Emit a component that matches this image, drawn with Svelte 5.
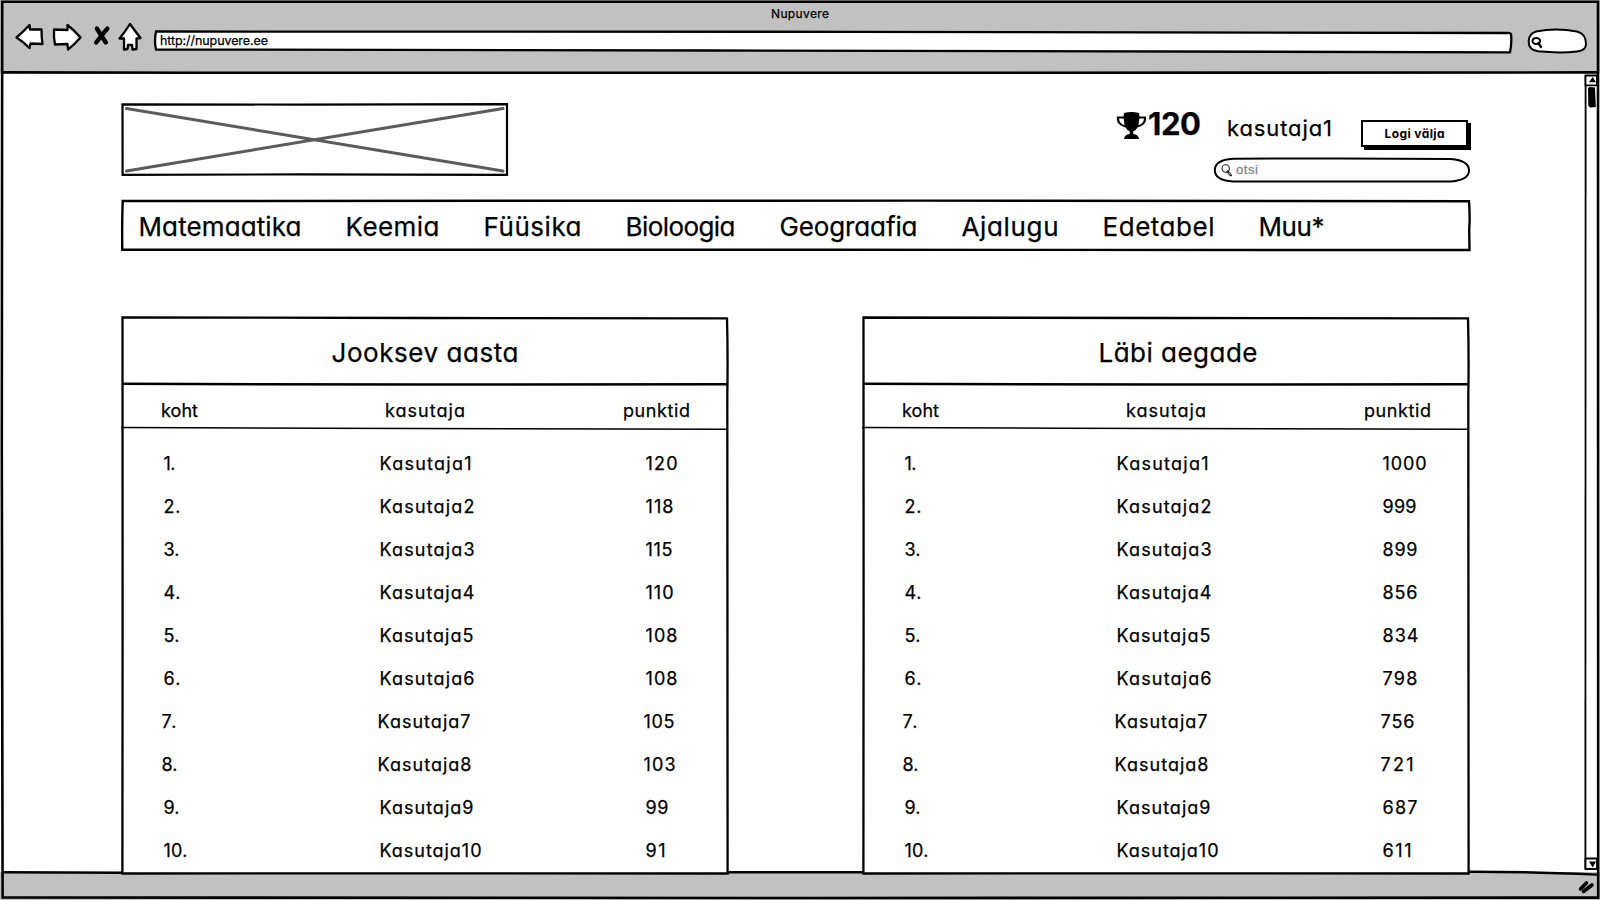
<script>
  const menu = [
    ['Matemaatika', 163], ['Keemia', 94], ['Füüsika', 98], ['Bioloogia', 110],
    ['Geograafia', 138], ['Ajalugu', 97], ['Edetabel', 112], ['Muu*', 66],
  ];

  const nameWidths = [92, 95, 95, 95, 94, 95, 93, 94, 94, 102];
  const placeWidths = [12, 17, 16, 17, 16, 17, 15, 16, 16, 24];

  const boards = [
    {
      title: 'Jooksev aasta', titleWidth: 187, side: 'left',
      points: [['120', 32], ['118', 28], ['115', 27], ['110', 28], ['108', 32], ['108', 32], ['105', 31], ['103', 32], ['99', 23], ['91', 20]],
    },
    {
      title: 'Läbi aegade', titleWidth: 159, side: 'right',
      points: [['1000', 44], ['999', 34], ['899', 35], ['856', 35], ['834', 36], ['798', 35], ['756', 34], ['721', 33], ['687', 35], ['611', 29]],
    },
  ];

  // Spreads the letters of a label so that it fills the given width.
  function fit(node, width) {
    const apply = (w) => {
      node.style.letterSpacing = '0px';
      node.style.marginRight = '0px';
      const natural = node.getBoundingClientRect().width;
      const gap = (w - natural) / Math.max(1, node.textContent.length - 1);
      node.style.letterSpacing = `${gap}px`;
      node.style.marginRight = `${-gap}px`;
    };
    apply(width);
    return { update: apply };
  }
</script>

<div class="browser">
  <header class="toolbar">
    <div class="window-title"><span use:fit={58}>Nupuvere</span></div>
    <div class="controls">
      <svg class="buttons" width="130" height="34" viewBox="14 20 130 34">
        <g fill="#fff" stroke="#000" stroke-width="2.3" stroke-linejoin="round">
          <path d="M16.5 37.5 Q23 32 29.5 25 L30 29.5 L41.5 29.5 Q41.5 37 42.5 44 L30.5 43.5 L29.5 48 Q23 41.5 16.5 37.5Z" />
          <path d="M80.5 37.5 Q75 31 67.5 25 L67.5 30 L54 29.5 Q53.5 37 55 44.5 L67.5 44 L68 49.5 Q75 44 80.5 37.5Z" />
          <path d="M130 24 Q135 31 140.5 38 L136.5 38.5 L136.5 49 L132.5 49.5 L132 45 L128 45 L127.5 49 L124 49.5 L124 38.5 L119.5 38.5 Q125 32 130 24Z" />
        </g>
        <path d="M96.8 28.5 L105.8 42.5 M107.3 28.7 Q102 35 96.2 42.5" stroke="#000" stroke-width="4.4" stroke-linecap="round" fill="none" />
      </svg>
      <div class="address">
        <svg class="sketch" viewBox="0 0 1360 24" preserveAspectRatio="none">
          <path d="M3 1.5 Q1 11 3 19.5 L560 20.5 L1357 22.3 Q1359 13 1358 4 Q1357 2.5 1354 3 L700 1.8Z" fill="#fff" stroke="#000" stroke-width="2.3" />
        </svg>
        <span use:fit={108}>http://nupuvere.ee</span>
      </div>
      <svg class="find" width="62" height="28" viewBox="1526 28 62 28">
        <path d="M1536 31.5 Q1556 27.5 1577 31.5 Q1586 34 1586 44 Q1586 50.5 1577 51.5 Q1560 53.5 1538 51.3 Q1528.5 50 1528.7 41.5 Q1528.5 34 1536 31.5Z" fill="#fff" stroke="#000" stroke-width="2" />
        <ellipse cx="1536.3" cy="41" rx="3.8" ry="3.1" fill="none" stroke="#000" stroke-width="2" />
        <path d="M1538.3 43 L1541 47" stroke="#000" stroke-width="2.3" stroke-linecap="round" />
      </svg>
    </div>
  </header>

  <main>
    <section class="top">
      <svg class="logo" width="388" height="74" viewBox="121 103 388 74">
        <path d="M122.5 104.3 L300 104.6 L507 104.2 L507 174.8 L300 174.4 L122.6 174.8Z" fill="#fff" stroke="#000" stroke-width="2.2" />
        <path d="M126.5 108.5 L503 171 M126.5 171 L503 108.5" stroke="#5b5b5b" stroke-width="3" stroke-linecap="round" />
      </svg>
      <div class="account">
        <div class="user">
          <svg width="31" height="28" viewBox="0 0 31 28">
            <path d="M8 1 Q15.5 -1 23 1 L23.5 4.5 L30 4.5 Q31.5 13 21.5 15.5 Q20 18.5 17.3 19.3 L17.3 22 Q22.5 22.5 23 27 L8 27 Q8.5 22.5 13.7 22 L13.7 19.3 Q11 18.5 9.5 15.5 Q-0.5 13 1 4.5 L7.5 4.5Z M7.6 6.5 L3 6.5 Q3.2 11.5 8.6 13.2 Z M23.4 6.5 L22.4 13.2 Q27.8 11.5 28 6.5Z" fill-rule="evenodd" />
          </svg>
          <b class="score"><span use:fit={53}>120</span></b>
          <span class="name"><span use:fit={105}>kasutaja1</span></span>
          <button><span use:fit={60}>Logi välja</span></button>
        </div>
        <div class="search">
          <svg class="sketch" viewBox="0 0 258 26" preserveAspectRatio="none">
            <path d="M20 1.7 L130 1.4 L238 2 Q256 3.5 256 13.5 Q256 23 238 24.4 L20 24.4 Q1.8 23.5 1.8 13 Q1.8 3 20 1.7Z" fill="#fdfdfd" stroke="#000" stroke-width="2" />
          </svg>
          <svg class="lens" width="12" height="13" viewBox="0 0 12 13">
            <circle cx="4.7" cy="4.5" r="3.7" fill="none" stroke="#222" stroke-width="1.1" />
            <path d="M6.6 7.6 L9.8 11.2" stroke="#222" stroke-width="2.4" stroke-linecap="round" />
            <path d="M7.5 8.6 L9.5 10.8" stroke="#fff" stroke-width=".7" />
          </svg>
          <span use:fit={22}>otsi</span>
        </div>
      </div>
    </section>

    <nav>
      <svg class="sketch" viewBox="0 0 1350 53" preserveAspectRatio="none">
        <path d="M1.7 2 L400 1.8 L800 1.6 L1348 2.2 Q1349.2 20 1348.2 30 L1348.5 51 L700 50.8 L1.3 50.8 Q.8 30 1.7 2Z" fill="#fff" stroke="#000" stroke-width="2.4" />
      </svg>
      {#each menu as [label, width]}
        <span use:fit={width}>{label}</span>
      {/each}
    </nav>

    <section class="boards">
      {#each boards as board}
        <article class={board.side}>
          <svg class="sketch" viewBox="0 0 608 559" preserveAspectRatio="none">
            <path d="M1.5 1.5 L300 2 L606 2.3 Q607 40 606.3 80 L606.6 557.5 L300 557.3 L1.4 557.5 L1.6 300Z" fill="#fff" stroke="#000" stroke-width="2.3" />
            <path d="M1 67.8 L300 68.6 L607 68.2" fill="none" stroke="#000" stroke-width="2.5" />
            <path d="M0 111.6 L200 112.2 L607 113.2" fill="none" stroke="#000" stroke-width="1.5" />
          </svg>
          <h2><span use:fit={board.titleWidth}>{board.title}</span></h2>
          <div class="row head">
            <div><span use:fit={37}>koht</span></div>
            <div><span use:fit={80}>kasutaja</span></div>
            <div><span use:fit={67}>punktid</span></div>
          </div>
          <div class="rows">
            {#each board.points as [score, width], i}
              <div class="row" class:nudged={i === 6 || i === 7}>
                <div><span use:fit={placeWidths[i]}>{i + 1}.</span></div>
                <div><span use:fit={nameWidths[i]}>Kasutaja{i + 1}</span></div>
                <div><span use:fit={width}>{score}</span></div>
              </div>
            {/each}
          </div>
        </article>
      {/each}
    </section>
  </main>

  <svg class="frame" width="1600" height="900" viewBox="0 0 1600 900">
    <path d="M2.5 872.3 L122 872.8 M728 872.3 L863 872.3 M1468 871.7 Q1520 871.5 1597 874.6" fill="none" stroke="#000" stroke-width="2.4" />
    <path d="M3 72.4 L200 72.8 L1000 72.8 L1597 72.4" fill="none" stroke="#000" stroke-width="2.6" />
    <path d="M2.2 1.8 L1598 1.8 L1598.2 897.6 L800 898 L2.6 897.5 L1.8 450Z" fill="none" stroke="#000" stroke-width="2.6" />
    <g fill="#fff" stroke="#000" stroke-width="1.8">
      <path d="M1585.6 75.5 L1585.4 869" />
      <path d="M1585.5 75.5 L1597 75.5 L1597 85.3 L1585.5 85.3Z" />
      <path d="M1585.5 858.5 L1597 858.5 L1597 869 L1585.5 869Z" />
    </g>
    <path d="M1592.7 77 L1596 82.3 L1589 82.3Z M1589 861.5 L1596 861.5 L1592.7 867.5Z" />
    <path d="M1589.5 87 L1595 87.5 L1595.8 107 L1590 107.5 L1588.3 105.5 L1588 88Z" />
    <path d="M1580.5 889 L1586.5 883 M1583.5 891.5 L1592 885" stroke="#000" stroke-width="3.6" stroke-linecap="round" />
  </svg>
</div>

<style>
  :global(body) { margin: 0; overflow: hidden; background: #fff; }
  .browser {
    position: relative;
    display: flex;
    flex-direction: column;
    width: 1600px;
    height: 900px;
    overflow: hidden;
    background: linear-gradient(#fff 872px, #c1c1c1 872px);
    color: #000;
    font-family: Inter, 'Liberation Sans', sans-serif;
    font-feature-settings: 'cv11' 1, 'calt' 0;
    -webkit-text-stroke: 0.25px currentColor;
  }
  span { display: inline-block; white-space: nowrap; }
  .sketch { position: absolute; inset: 0; width: 100%; height: 100%; }
  .sketch ~ * { position: relative; }
  .frame { position: absolute; inset: 0; pointer-events: none; }

  .toolbar { height: 73px; background: #c1c1c1; box-sizing: border-box; }
  .window-title { display: flex; justify-content: center; height: 28px; line-height: 28px; font-size: 12px; }
  .controls { display: flex; padding-left: 14px; }
  .buttons { flex: none; margin-top: -8px; }
  .address {
    position: relative;
    width: 1360px;
    height: 24px;
    margin: 2px 14px 0 9px;
    padding-left: 7px;
    box-sizing: border-box;
    line-height: 21px;
    font-size: 12.5px;
  }
  .find { flex: none; margin-left: -1px; }

  main { flex: 1; padding: 30px 0 0 121px; }
  .top { display: flex; justify-content: space-between; width: 1350px; height: 96px; }
  .account { display: flex; flex-direction: column; align-items: flex-end; }
  .user { display: flex; height: 54px; }
  .user svg { margin: 9px 1px 0 0; }
  .score { width: 79px; font-size: 31px; line-height: 41px; }
  .name { width: 134px; font-size: 22px; line-height: 50px; }
  button {
    width: 107px;
    height: 27px;
    margin: 17px 3px 0 0;
    padding: 0;
    border: 2px solid #000;
    background: #fff;
    box-shadow: 3px 3px 0 #000;
    color: #000;
    font: 700 12px Inter, 'Liberation Sans', sans-serif;
    font-feature-settings: inherit;
    -webkit-text-stroke: 0;
  }
  .search {
    position: relative;
    display: flex;
    width: 258px;
    height: 26px;
    padding-left: 8px;
    box-sizing: border-box;
    gap: 1px;
    color: #808086;
    font: 13px/26px 'Liberation Sans', sans-serif;
  }
  .search .lens { margin: 7px 2px 0 0; }

  nav {
    position: relative;
    display: flex;
    gap: 44px;
    width: 1350px;
    height: 53px;
    padding-left: 17.5px;
    box-sizing: border-box;
    font-size: 26px;
    line-height: 55px;
  }

  .boards { display: flex; gap: 133px; margin-top: 64px; }
  article { position: relative; width: 608px; height: 559px; }
  h2 { margin: 0; height: 68px; font-size: 26px; font-weight: 400; line-height: 74px; text-align: center; }
  .right h2 { padding-left: 24px; }
  .row { display: grid; grid-template-columns: 216px 266px 1fr; height: 43px; padding-left: 42.5px; font-size: 18px; line-height: 43px; }
  .head { grid-template-columns: 224px 238px 1fr; height: 44px; padding-left: 40px; line-height: 54px; }
  .rows { padding-top: 14px; }
  .nudged { left: -2px; position: relative; }
  .right .row:not(.head) { grid-template-columns: 212px 266px 1fr; }
</style>
